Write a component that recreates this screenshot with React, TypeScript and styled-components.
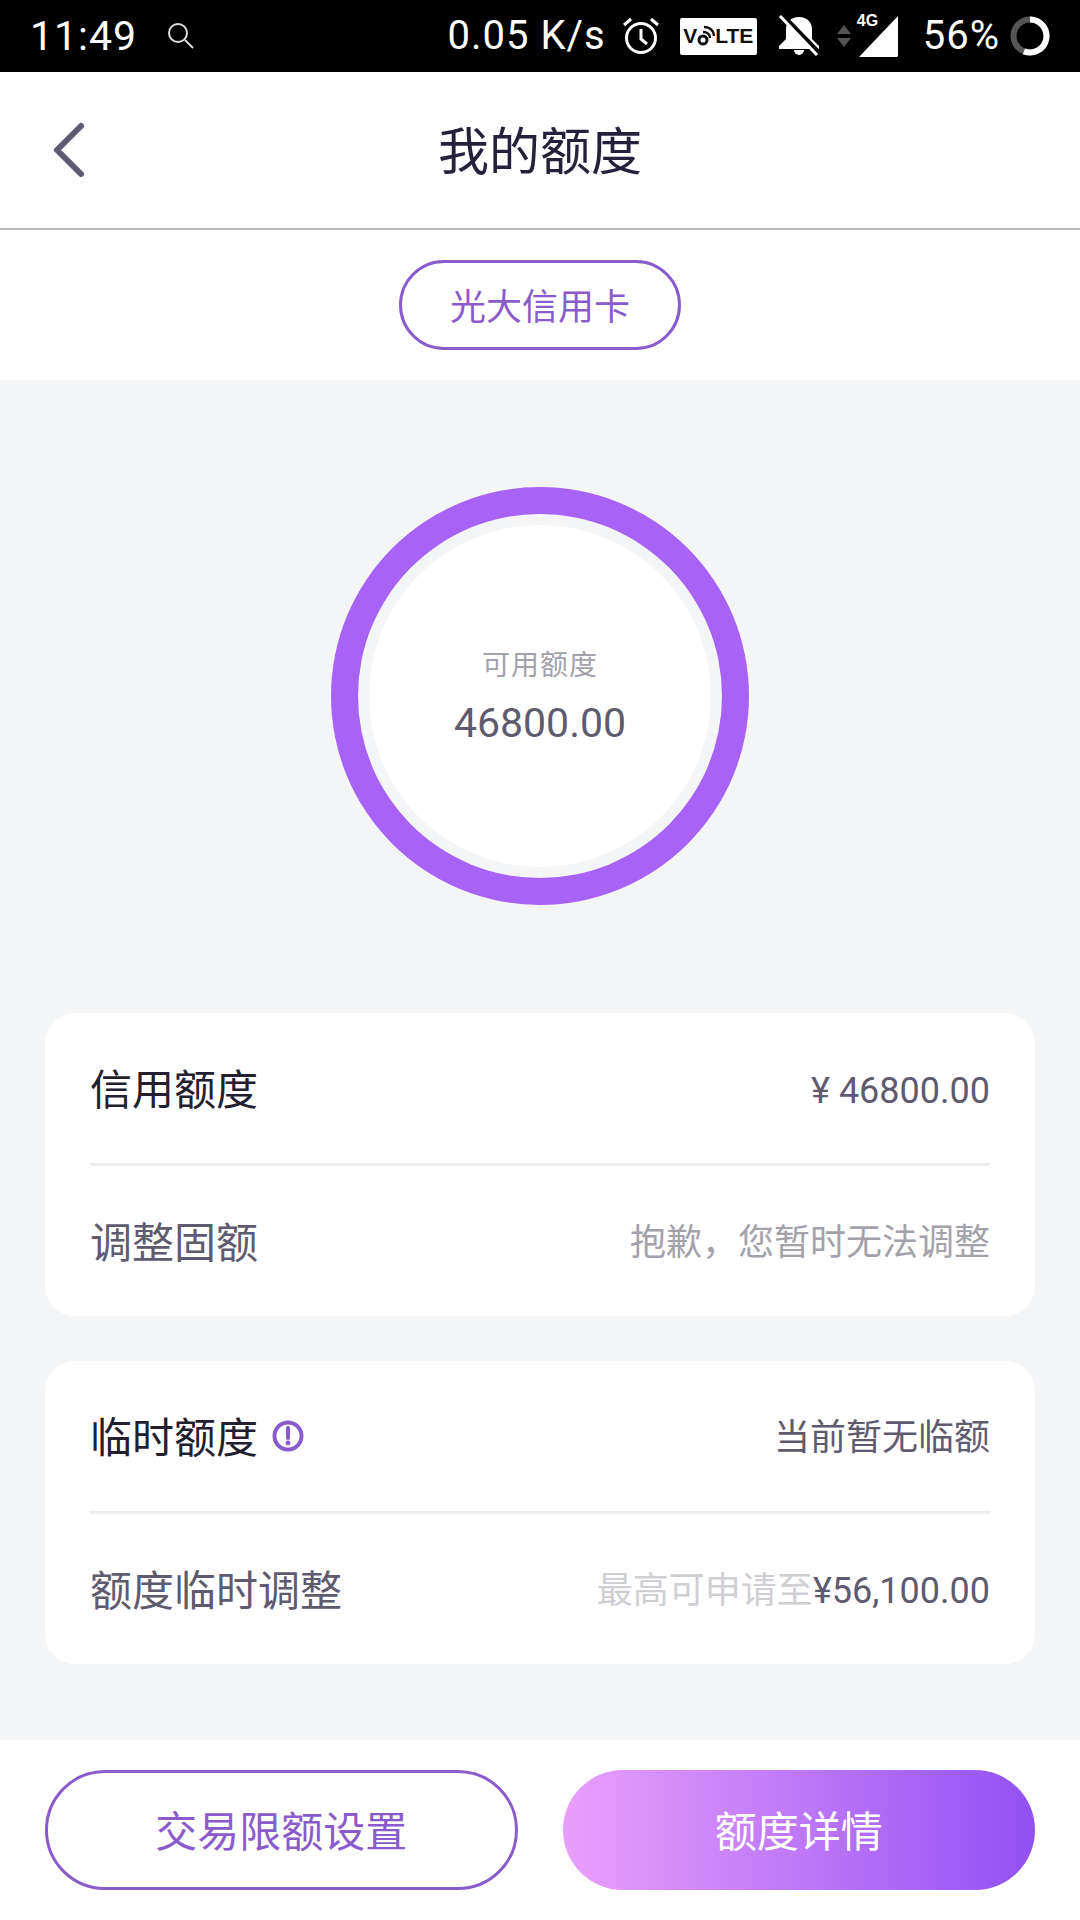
import React from 'react';
import styled, { createGlobalStyle } from 'styled-components';

const GlobalStyle = createGlobalStyle`
    html, body {
        margin: 0;
        padding: 0;
        background: #fff;
    }
    * {
        box-sizing: border-box;
    }
`;

const Page = styled.div`
    width: 1080px;
    height: 1920px;
    display: flex;
    flex-direction: column;
    overflow: hidden;
    font-family: Roboto, 'Noto Sans CJK SC', sans-serif;
    background: #fff;
`;

const StatusBar = styled.div`
    height: 72px;
    flex: none;
    display: flex;
    align-items: center;
    padding: 0 30px 0 30px;
    background: #000;
    color: #fff;
`;

const StatusText = styled.span<{ $size?: number; $left?: number }>`
    font-size: ${(p) => p.$size || 40}px;
    line-height: 72px;
    letter-spacing: 1px;
    margin-left: ${(p) => p.$left || 0}px;
    white-space: nowrap;
`;

const StatusIcon = styled.svg<{ $left: number }>`
    display: block;
    flex: none;
    margin-left: ${(p) => p.$left}px;
`;

const Spacer = styled.div`
    flex: 1;
`;

const VolteBadge = styled.div`
    width: 77px;
    height: 37px;
    margin-left: 20px;
    flex: none;
    display: flex;
    align-items: center;
    justify-content: center;
    background: #fff;
    border-radius: 2px;
    color: #111;
    font-family: 'Liberation Sans', sans-serif;
    font-size: 21px;
    font-weight: 700;
`;

const SignalBox = styled.div`
    position: relative;
    width: 41px;
    height: 42px;
    margin-left: 7px;
    flex: none;
`;

const SignalLabel = styled.span`
    position: absolute;
    left: -1px;
    top: -2px;
    font-family: 'Liberation Sans', sans-serif;
    font-size: 16px;
    line-height: 16px;
    font-weight: 700;
    color: #fff;
`;

const NavBar = styled.div`
    height: 158px;
    flex: none;
    position: relative;
    display: flex;
    align-items: center;
    justify-content: center;
    border-bottom: 2px solid #b9b9b9;
`;

const BackButton = styled.svg`
    position: absolute;
    left: 52px;
    top: 49px;
`;

const Title = styled.div`
    font-size: 51px;
    color: #24213a;
    margin-top: -4px;
`;

const TabRow = styled.div`
    height: 150px;
    flex: none;
    display: flex;
    align-items: center;
    justify-content: center;
`;

const CardPill = styled.div`
    width: 282px;
    height: 90px;
    display: flex;
    align-items: center;
    justify-content: center;
    padding-bottom: 3px;
    border: 3px solid #8a5ccb;
    border-radius: 45px;
    color: #8a5ccb;
    font-size: 36px;
`;

const Content = styled.div`
    flex: 1;
    display: flex;
    flex-direction: column;
    align-items: center;
    padding: 107px 45px 0;
    background: #f4f5f7;
`;

const Ring = styled.div`
    width: 418px;
    height: 418px;
    flex: none;
    padding: 27px;
    border-radius: 50%;
    background: #a862f5;
    margin-bottom: 108px;
`;

const RingTrack = styled.div`
    width: 100%;
    height: 100%;
    padding: 11px;
    border-radius: 50%;
    background: #f4f5f7;
`;

const RingCenter = styled.div`
    width: 100%;
    height: 100%;
    display: flex;
    flex-direction: column;
    align-items: center;
    justify-content: center;
    padding-top: 2px;
    border-radius: 50%;
    background: #fff;
`;

const RingLabel = styled.div`
    font-size: 28px;
    line-height: 40px;
    letter-spacing: 1px;
    color: #a3a2aa;
`;

const RingAmount = styled.div`
    font-size: 41px;
    line-height: 50px;
    margin-top: 12px;
    color: #5f5b6e;
`;

const Card = styled.div`
    width: 990px;
    height: 303px;
    flex: none;
    display: flex;
    flex-direction: column;
    padding: 0 45px;
    margin-bottom: 45px;
    border-radius: 30px;
    background: #fff;
`;

const Row = styled.div`
    flex: 1;
    display: flex;
    align-items: center;
    justify-content: space-between;
    padding-bottom: 4px;
    & + & {
        border-top: 3px solid #eeeef0;
    }
`;

const RowLabel = styled.div<{ $muted?: boolean }>`
    display: flex;
    align-items: center;
    font-size: 42px;
    color: ${(p) => (p.$muted ? '#5f5b6e' : '#22202e')};
`;

const RowValue = styled.div<{ $tone?: 'dark' | 'grey'; $numeric?: boolean }>`
    font-size: 36px;
    margin-top: ${(p) => (p.$numeric ? 10 : 0)}px;
    color: ${(p) => (p.$tone === 'grey' ? '#a3a2aa' : '#5f5b6e')};
`;

const Faint = styled.span`
    color: #cfcfd3;
`;

const InfoIcon = styled.svg`
    display: block;
    margin: 4px 0 0 14px;
`;

const Footer = styled.div`
    height: 180px;
    flex: none;
    display: grid;
    grid-template-columns: 1fr 1fr;
    align-items: start;
    gap: 45px;
    padding: 30px 45px;
    background: #fff;
`;

const FooterButton = styled.div<{ $solid?: boolean }>`
    height: 120px;
    display: flex;
    align-items: center;
    justify-content: center;
    padding-bottom: 4px;
    border-radius: 60px;
    font-size: 42px;
    color: ${(p) => (p.$solid ? '#fff' : '#8a5ccb')};
    border: ${(p) => (p.$solid ? 'none' : '3px solid #8a5ccb')};
    background: ${(p) => (p.$solid ? 'linear-gradient(90deg, #ea9ffb, #9250f3)' : '#fff')};
`;

const App: React.FunctionComponent = () => {
    return (
        <Page>
            <GlobalStyle />
            <StatusBar>
                <StatusText $size={41}>11:49</StatusText>
                <StatusIcon $left={30} width="28" height="28" viewBox="0 0 28 28" fill="none" stroke="#ddd" strokeWidth="2">
                    <circle cx="11" cy="11" r="9" />
                    <path d="M18 18l8 8" />
                </StatusIcon>
                <Spacer />
                <StatusText>0.05 K/s</StatusText>
                <StatusIcon $left={16} width="38" height="38" viewBox="0 0 38 38" fill="none" stroke="#fff" strokeWidth="3">
                    <circle cx="19" cy="21" r="14.5" />
                    <path d="M19 12v10l6 5M2 8l7-6M36 8l-7-6" />
                </StatusIcon>
                <VolteBadge>
                    V
                    <svg width="18" height="24" viewBox="0 0 18 24" fill="none" stroke="#111">
                        <circle cx="6" cy="16" r="4" strokeWidth="3" />
                        <path d="M6 8c4.500 0 7 2.500 7 6M7 3c6 0 10 4 10 9" strokeWidth="2.400" />
                    </svg>
                    LTE
                </VolteBadge>
                <StatusIcon $left={21} width="42" height="42" viewBox="0 0 42 42" fill="#fff">
                    <path d="M21 2c-8 0-13 5-13 12v10l-7 7v3h40v-3l-7-7V14c0-7-5-12-13-12z" />
                    <path d="M16 35a5 5 0 0 0 10 0z" />
                    <path d="M5 1l36 37" stroke="#000" strokeWidth="5" />
                    <path d="M2 1l37 39" stroke="#fff" strokeWidth="3" />
                </StatusIcon>
                <StatusIcon $left={17} width="14" height="22" viewBox="0 0 14 22" fill="#555">
                    <path d="M7 0l7 9H0zM0 13h14l-7 9z" />
                </StatusIcon>
                <SignalBox>
                    <SignalLabel>4G</SignalLabel>
                    <svg width="41" height="42" viewBox="0 0 41 42" fill="#fff">
                        <path d="M40 1v39a2 2 0 0 1-1 2H1z" />
                    </svg>
                </SignalBox>
                <StatusText $left={24}>56%</StatusText>
                <StatusIcon $left={10} width="40" height="40" viewBox="0 0 40 40" fill="none" strokeWidth="6">
                    <circle cx="20" cy="20" r="16.5" stroke="#555" />
                    <path d="M20 3.500A16.500 16.500 0 1 1 13.930 35.340" stroke="#fff" />
                </StatusIcon>
            </StatusBar>
            <NavBar>
                <BackButton width="34" height="58" viewBox="0 0 34 58" fill="none" stroke="#5f5a70" strokeWidth="6" strokeLinecap="round" strokeLinejoin="round">
                    <path d="M29 5L5 29l24 24" />
                </BackButton>
                <Title>我的额度</Title>
            </NavBar>
            <TabRow>
                <CardPill>光大信用卡</CardPill>
            </TabRow>
            <Content>
                <Ring>
                    <RingTrack>
                        <RingCenter>
                            <RingLabel>可用额度</RingLabel>
                            <RingAmount>46800.00</RingAmount>
                        </RingCenter>
                    </RingTrack>
                </Ring>
                <Card>
                    <Row>
                        <RowLabel>信用额度</RowLabel>
                        <RowValue $numeric>¥ 46800.00</RowValue>
                    </Row>
                    <Row>
                        <RowLabel $muted>调整固额</RowLabel>
                        <RowValue $tone="grey">抱歉，您暂时无法调整</RowValue>
                    </Row>
                </Card>
                <Card>
                    <Row>
                        <RowLabel>
                            临时额度
                            <InfoIcon width="32" height="32" viewBox="0 0 32 32" fill="none">
                                <circle cx="16" cy="16" r="13.500" stroke="#8a5ccb" strokeWidth="4" />
                                <path d="M16 8v10" stroke="#8a5ccb" strokeWidth="4" strokeLinecap="round" />
                                <circle cx="16" cy="23" r="2.400" fill="#8a5ccb" />
                            </InfoIcon>
                        </RowLabel>
                        <RowValue>当前暂无临额</RowValue>
                    </Row>
                    <Row>
                        <RowLabel $muted>额度临时调整</RowLabel>
                        <RowValue>
                            <Faint>最高可申请至</Faint>¥56,100.00
                        </RowValue>
                    </Row>
                </Card>
            </Content>
            <Footer>
                <FooterButton>交易限额设置</FooterButton>
                <FooterButton $solid>额度详情</FooterButton>
            </Footer>
        </Page>
    );
};

export default App;
